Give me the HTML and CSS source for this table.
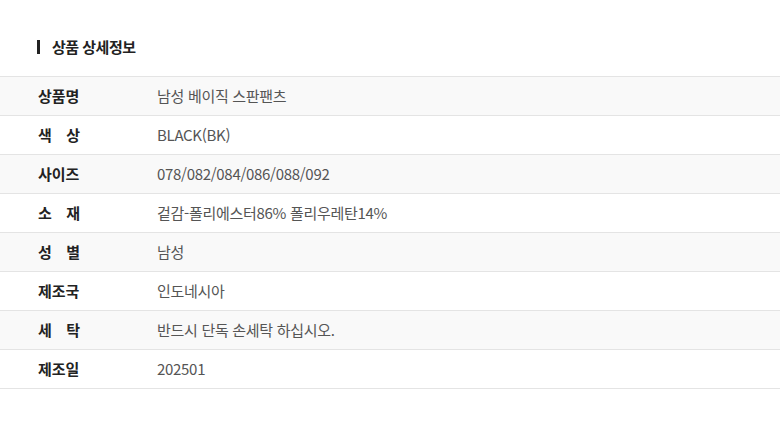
FILE: index.html
```html
<!DOCTYPE html>
<html lang="ko">
<head>
  <meta charset="UTF-8" />
  <meta name="viewport" content="width=device-width, initial-scale=1.0"/>
  <title>상품 상세정보</title>
  <link rel="stylesheet" href="styles.css">
</head>
<body>

  <h2 class="info-title">상품 상세정보</h2>

  <div class="info-table">
    <div class="info-row">
      <div class="info-label">상품명</div>
      <div class="info-value">남성 베이직 스판팬츠</div>
    </div>
    <div class="info-row">
      <div class="info-label spread"><span>색</span><span>상</span></div>
      <div class="info-value">BLACK(BK)</div>
    </div>
    <div class="info-row">
      <div class="info-label">사이즈</div>
      <div class="info-value">078/082/084/086/088/092</div>
    </div>
    <div class="info-row">
      <div class="info-label spread"><span>소</span><span>재</span></div>
      <div class="info-value">겉감-폴리에스터86% 폴리우레탄14%</div>
    </div>
    <div class="info-row">
      <div class="info-label spread"><span>성</span><span>별</span></div>
      <div class="info-value">남성</div>
    </div>
    <div class="info-row">
      <div class="info-label">제조국</div>
      <div class="info-value">인도네시아</div>
    </div>
    <div class="info-row">
      <div class="info-label spread"><span>세</span><span>탁</span></div>
      <div class="info-value">반드시 단독 손세탁 하십시오.</div>
    </div>
    <div class="info-row">
      <div class="info-label">제조일</div>
      <div class="info-value">202501</div>
    </div>
  </div>

</body>
</html>
```

FILE: styles.css
```css
body {
  margin: 0;
  background: #fff;
  font-family: 'Noto Sans CJK KR', 'Noto Sans', sans-serif;
  color: #222;
}

.info-title {
  margin: 0;
  padding: 36px 0 18px 37px;
  height: 22px;
  font-size: 15px;
  font-weight: 700;
  letter-spacing: -0.5px;
  line-height: 22px;
  display: flex;
  align-items: center;
  gap: 12px;
}

.info-title::before {
  content: "";
  width: 3px;
  height: 14px;
  background: #222;
}

.info-table {
  border-top: 1px solid #e4e4e4;
}

.info-row {
  display: flex;
  align-items: center;
  height: 38px;
  border-bottom: 1px solid #e4e4e4;
  font-size: 15px;
}

.info-row > div {
  margin-bottom: 2px;
}

.info-row:nth-child(odd) {
  background: #f9f9f9;
}

.info-label {
  width: 42px;
  margin-left: 38px;
  font-weight: 700;
  color: #222;
}

.info-label.spread {
  display: flex;
  justify-content: space-between;
}

.info-value {
  margin-left: 77px;
  color: #555;
  letter-spacing: -0.3px;
}
```
